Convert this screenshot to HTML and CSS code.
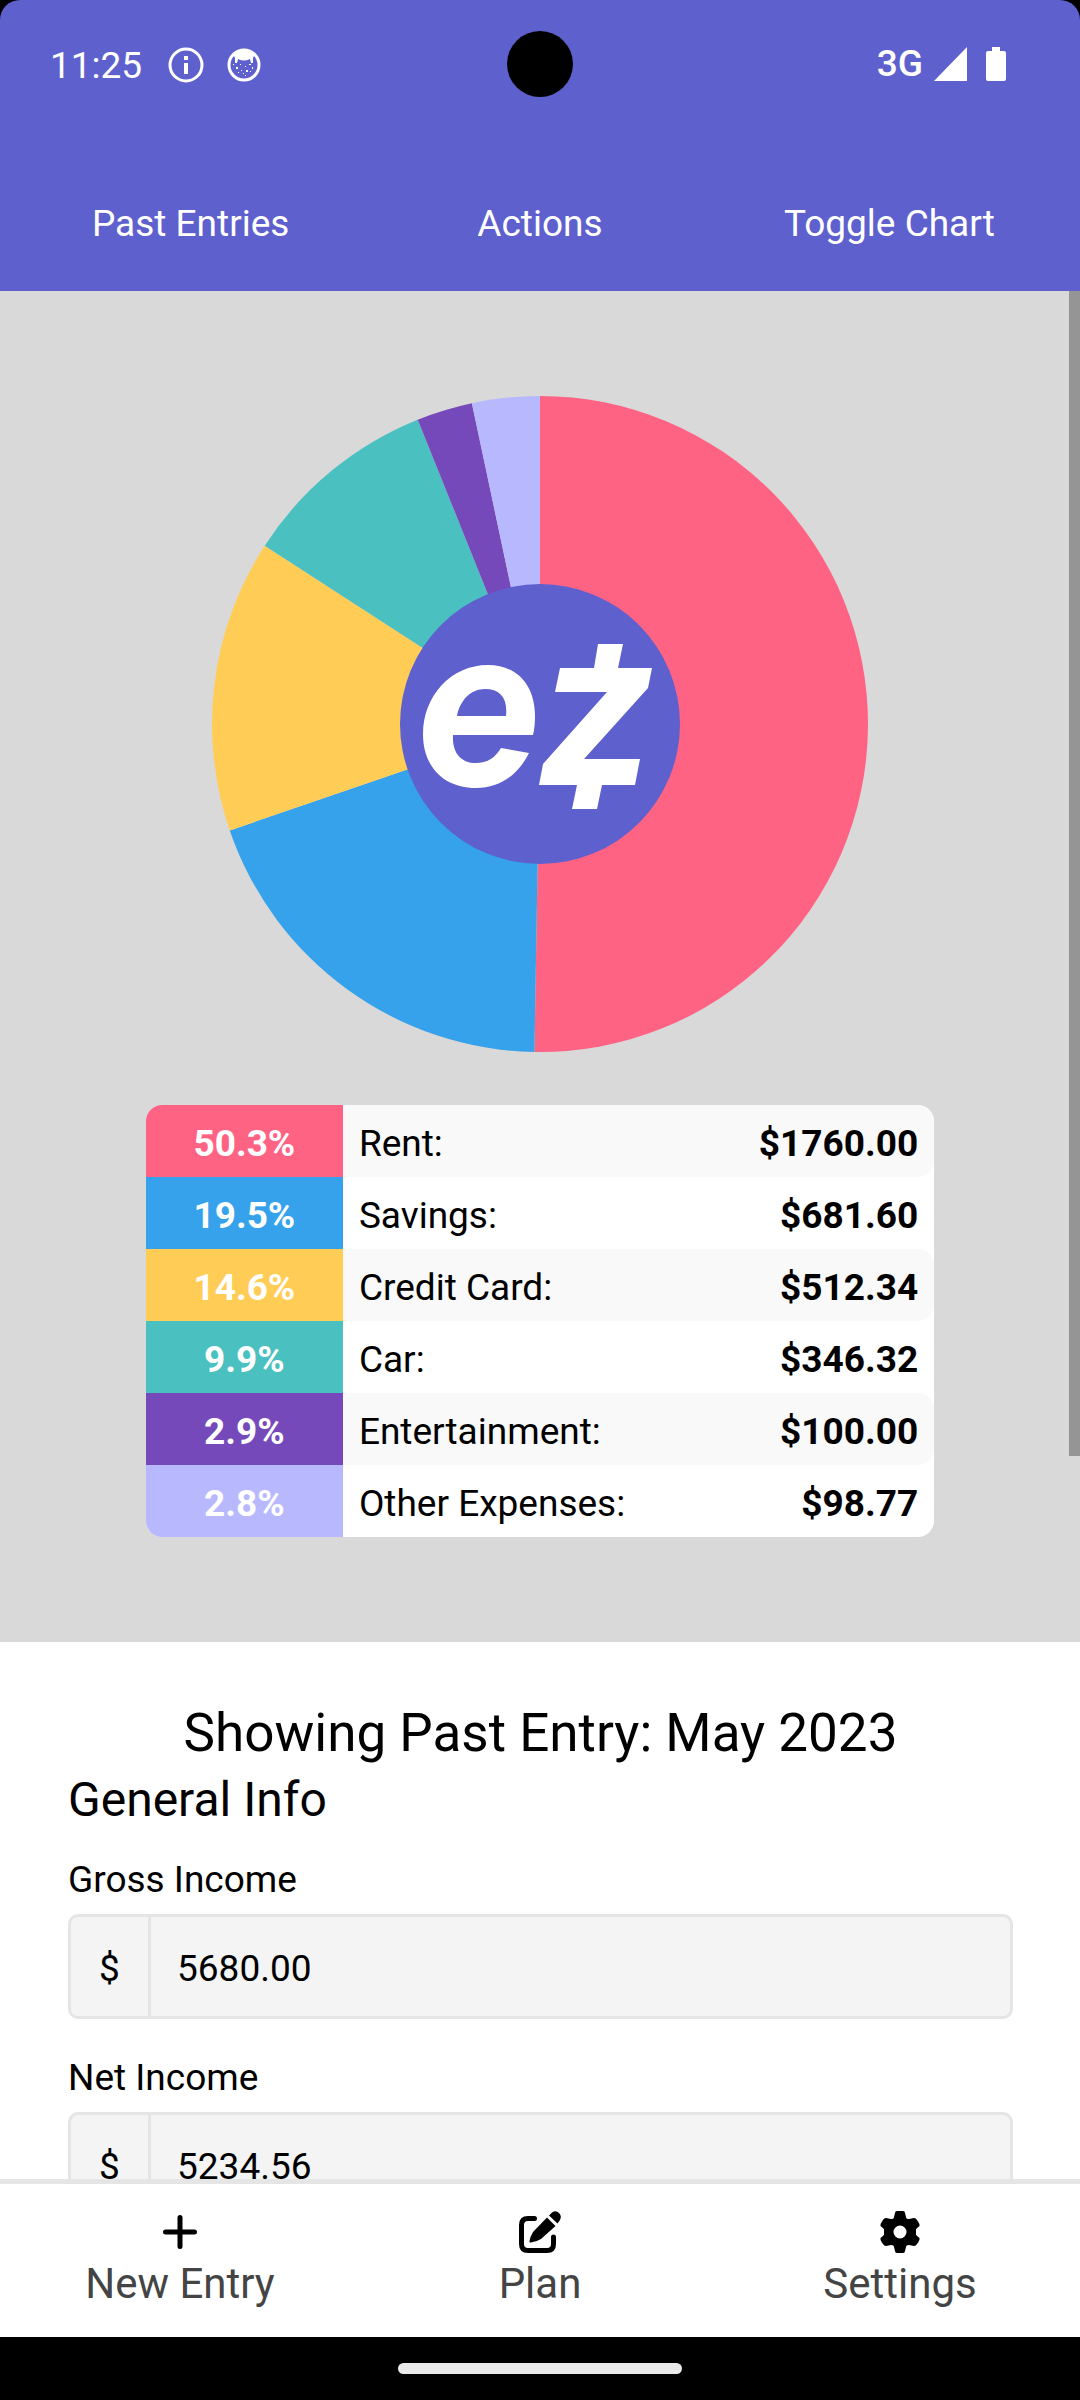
FILE: index.html
```html
<!DOCTYPE html>
<html lang="en">
<head>
<meta charset="utf-8">
<meta name="viewport" content="width=device-width, initial-scale=1">
<title>Budget – May 2023</title>
<link rel="stylesheet" href="styles.css">
</head>
<body>
<div class="app">
  <header class="header">
    <div class="status">
      <div class="status-group status-left">
        <span class="clock">11:25</span>
        <svg class="status-icon" viewBox="0 0 36 36" aria-hidden="true"><circle cx="18" cy="18" r="16" fill="none" stroke="#fff" stroke-width="3"/><path d="M16 16h4v11h-4zM16 9h4v4h-4z" fill="#fff"/></svg>
        <svg class="status-icon" viewBox="0 0 36 36" aria-hidden="true"><circle cx="18" cy="18" r="15" fill="none" stroke="#fff" stroke-width="3"/><path d="M7 7Q18-1 29 7L27 11L27 16H25L24 12Q18 15 12 12L11 16H9L9 11Z" fill="#fff"/><g fill="#fff"><path d="M10 20h2v2h-2zM14 17h1v1h-1zM19 19h1v1h-1zM23 17h2v1h-2zM26 20h1v2h-1zM15 23h1v1h-1zM20 23h2v2h-2zM17 26h1v1h-1zM12 25h1v1h-1zM24 24h1v1h-1zM19 28h1v1h-1zM7 17h1v1h-1z"/></g></svg>
      </div>
      <span class="camera"></span>
      <div class="status-group status-right">
        <span class="network">3G</span>
        <svg class="signal" viewBox="0 0 33 34" aria-hidden="true"><path d="M33 0V34H0Z" fill="#fff"/></svg>
        <svg class="battery" viewBox="0 0 20 34" aria-hidden="true"><path d="M6 0h8v4h4q2 0 2 2v26q0 2-2 2H2q-2 0-2-2V6q0-2 2-2h4z" fill="#fff"/></svg>
      </div>
    </div>
    <nav class="actions">
      <button type="button">Past Entries</button>
      <button type="button">Actions</button>
      <button type="button">Toggle Chart</button>
    </nav>
  </header>

  <main class="content">
    <section class="chart">
      <svg class="pie" viewBox="-328 -328 656 656" role="img" aria-label="Spending by category">
        <g class="slices"></g>
        <circle r="140" fill="#5e60ce"/>
        <g fill="#fff">
          <path fill-rule="evenodd" d="M-7 11H-87C-88 29-79 39-64 39C-53 39-45 34-39 24L-11 29C-22 51-40 64-64 64C-96 64-117 43-117 10C-117-28-89-59-52-59C-22-59-5-38-5-8Q-5 3-7 11ZM-83-8H-34C-32-26-40-35-55-35C-69-35-80-24-83-8Z"/>
          <path d="M58-80H83L78-56H112L108-36L44 35H100L95 61H62L57 85H32L37 61H-1L3 40L67-32H15L20-56H54Z"/>
        </g>
      </svg>
      <table class="legend">
        <tbody>
          <tr><td class="pct rent">50.3%</td><th scope="row">Rent:</th><td class="amount">$1760.00</td></tr>
          <tr><td class="pct savings">19.5%</td><th scope="row">Savings:</th><td class="amount">$681.60</td></tr>
          <tr><td class="pct credit">14.6%</td><th scope="row">Credit Card:</th><td class="amount">$512.34</td></tr>
          <tr><td class="pct car">9.9%</td><th scope="row">Car:</th><td class="amount">$346.32</td></tr>
          <tr><td class="pct fun">2.9%</td><th scope="row">Entertainment:</th><td class="amount">$100.00</td></tr>
          <tr><td class="pct other">2.8%</td><th scope="row">Other Expenses:</th><td class="amount">$98.77</td></tr>
        </tbody>
      </table>
    </section>
    <form class="entry">
      <h1>Showing Past Entry: May 2023</h1>
      <h2>General Info</h2>
      <label for="gross">Gross Income</label>
      <div class="field"><span class="prefix">$</span><input id="gross" type="text" inputmode="decimal" value="5680.00"></div>
      <label for="net">Net Income</label>
      <div class="field"><span class="prefix">$</span><input id="net" type="text" inputmode="decimal" value="5234.56"></div>
    </form>
    <div class="scroll-thumb"></div>
  </main>

  <nav class="tabs">
    <a href="#new"><svg viewBox="0 0 48 48" aria-hidden="true"><path d="M24 9.500V38.500M9.500 24H38.500" stroke="#000" stroke-width="5" stroke-linecap="round"/></svg>New Entry</a>
    <a href="#plan"><svg viewBox="0 0 48 48" aria-hidden="true"><path d="M18.500 10.500H12Q5.500 10.500 5.500 17V36Q5.500 42.500 12 42.500H31Q37.500 42.500 37.500 36V29" fill="none" stroke="#000" stroke-width="5" stroke-linecap="round"/><path d="M15 34.500Q13 35 13.500 33Q14 29 17 24L31 9.500L39.500 18L25 31Q20 34 15 34.500ZM33 7.500L36 4.500Q40 2 43 5T44 12L41.500 15.500Z"/></svg>Plan</a>
    <a href="#settings"><svg viewBox="0 0 48 48" aria-hidden="true"><path fill-rule="evenodd" d="M21 3H27Q29 3 29 5L30 9Q30 11 33 11L38 10Q40 10 41 12Q44 16 43.500 18L40 21V27L43.500 30Q44 32 41 36Q40 38 38 38L33 37Q30 37 30 39L29 43Q29 45 27 45H21Q19 45 19 43L18 39Q18 37 15 37L10 38Q8 38 7 36Q4 32 4.500 30L8 27V21L4.500 18Q4 16 7 12Q8 10 10 10L15 11Q18 11 18 9L19 5Q19 3 21 3ZM24 17.500A6.500 6.500 0 1 0 24 30.500A6.500 6.500 0 1 0 24 17.500Z"/></svg>Settings</a>
  </nav>
  <footer class="system-bar"><span class="pill"></span></footer>
</div>
<script src="chart.js"></script>
</body>
</html>
```
FILE: styles.css
```css
* {
  box-sizing: border-box;
}

body {
  margin: 0;
  background: #000;
  color: #000;
  font: 37px/44px Roboto, sans-serif;
}

button,
input {
  font: inherit;
  color: inherit;
  border: 0;
  background: none;
  padding: 0;
}

.app {
  display: flex;
  flex-direction: column;
  height: 100vh;
}

/* Header */
.header {
  background: #5e60ce;
  color: #fff;
  border-radius: 20px 20px 0 0;
}

.status {
  display: grid;
  grid-template-columns: 1fr auto 1fr;
  align-items: center;
  height: 128px;
  padding: 0 74px 0 50px;
}

.status-group {
  display: flex;
  align-items: center;
}

.status-left {
  padding-top: 2px;
}

.status-right {
  grid-column: 3;
  justify-content: flex-end;
}

.clock {
  padding-top: 2px;
  margin-right: 26px;
}

.status-icon {
  width: 36px;
  height: 36px;
  margin-right: 22px;
}

.camera {
  width: 66px;
  height: 66px;
  border-radius: 50%;
  background: #000;
  position: absolute;
  left: 50%;
  margin-left: -33px;
}

.network {
  font-weight: 500;
  margin-right: 11px;
}

.signal {
  width: 33px;
  height: 34px;
  margin-right: 19px;
}

.battery {
  width: 20px;
  height: 34px;
}

.actions {
  display: grid;
  grid-template-columns: repeat(3, 1fr);
  height: 163px;
  padding: 28px 16px 0;
}

/* Scrolling content */
.content {
  position: relative;
  flex: 1;
  min-height: 0;
  overflow: hidden;
  background: #fff;
}

.scroll-thumb {
  position: absolute;
  top: 0;
  right: 0;
  width: 11px;
  height: 1165px;
  background: #959595;
}

.chart {
  display: flex;
  flex-direction: column;
  align-items: center;
  gap: 53px;
  padding: 105px 0;
  background: #d9d9d9;
}

.pie {
  width: 656px;
  height: 656px;
}

.legend {
  width: 73%;
  table-layout: fixed;
  border-collapse: collapse;
  background: #fff;
  border-radius: 16px;
  overflow: hidden;
}

.legend td,
.legend th {
  height: 72px;
  padding: 6px 16px 0;
  text-align: left;
  font-weight: 400;
}

.legend tr:nth-child(odd) > * {
  background-color: #f9f9f9;
}

.legend .pct {
  width: 25%;
  color: #fff;
  font-weight: 700;
  text-align: center;
}

.legend .amount {
  width: 30%;
  font-weight: 700;
  text-align: right;
  border-radius: 0 16px 16px 0;
}

.legend tr > .rent { background-color: #ff6384; }
.legend tr > .savings { background-color: #36a2eb; }
.legend tr > .credit { background-color: #ffcd56; }
.legend tr > .car { background-color: #4bc0c0; }
.legend tr > .fun { background-color: #7649ba; }
.legend tr > .other { background-color: #b8b8ff; }

/* Entry form */
.entry {
  display: flex;
  flex-direction: column;
  padding: 60px 67px 60px 68px;
}

.entry h1,
.entry h2 {
  margin: 0;
  font-weight: 400;
}

.entry h1 {
  font-size: 53px;
  line-height: 62px;
  text-align: center;
}

.entry h2 {
  font-size: 48px;
  line-height: 72px;
  margin-bottom: 22px;
}

.entry label {
  margin-bottom: 12px;
}

.field {
  display: flex;
  height: 105px;
  margin-bottom: 37px;
  border: 3px solid #e5e5e5;
  border-radius: 10px;
  background: #f4f4f4;
  overflow: hidden;
}

.prefix {
  display: flex;
  align-items: center;
  justify-content: center;
  width: 80px;
  padding-top: 4px;
  border-right: 3px solid #e5e5e5;
}

.field input {
  flex: 1;
  min-width: 0;
  padding: 4px 26px 0;
}

/* Bottom navigation */
.tabs {
  display: grid;
  grid-template-columns: repeat(3, 1fr);
  height: 158px;
  padding-top: 24px;
  border-top: 5px solid #e5e5e5;
  background: #fff;
}

.tabs a {
  display: flex;
  flex-direction: column;
  align-items: center;
  gap: 3px;
  color: #444;
  font-size: 42px;
  line-height: 50px;
  text-decoration: none;
}

.tabs svg {
  width: 48px;
  height: 48px;
}

.system-bar {
  display: flex;
  align-items: center;
  justify-content: center;
  height: 63px;
}

.pill {
  width: 284px;
  height: 11px;
  border-radius: 6px;
  background: #eaeaea;
}
```
FILE: chart.js
```js
// Share of the pie, in percent, and the colour of each slice
const slices = [
  [50.27, '#ff6384'],
  [19.47, '#36a2eb'],
  [14.41, '#ffcd56'],
  [9.77, '#4bc0c0'],
  [2.75, '#7649ba'],
  [3.33, '#b8b8ff'],
];
const radius = 328;
const total = slices.reduce((sum, [value]) => sum + value, 0);
const group = document.querySelector('.slices');
let start = 0;

for (const [value, color] of slices) {
  const end = start + (value / total) * 2 * Math.PI;
  const point = (a) => `${radius * Math.sin(a)} ${-radius * Math.cos(a)}`;
  const large = end - start > Math.PI ? 1 : 0;
  const path = document.createElementNS('http://www.w3.org/2000/svg', 'path');
  path.setAttribute('d', `M0 0L${point(start)}A${radius} ${radius} 0 ${large} 1 ${point(end)}Z`);
  path.setAttribute('fill', color);
  group.append(path);
  start = end;
}
```
